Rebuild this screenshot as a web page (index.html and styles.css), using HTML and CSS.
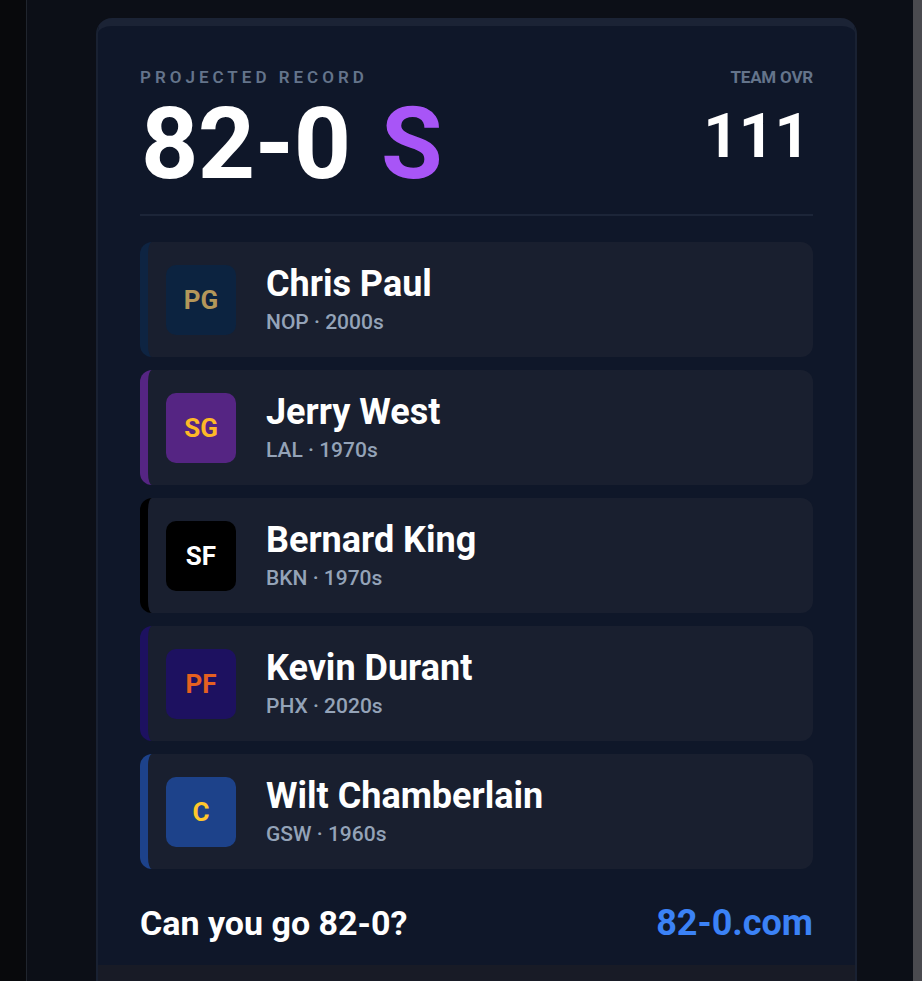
FILE: index.html
```html
<!DOCTYPE html>
<html lang="en">
<head>
<meta charset="utf-8">
<title>82-0 Projected Record</title>
<link rel="stylesheet" href="styles.css">
</head>
<body>
<div class="app">
  <div class="rail"></div>
  <main class="stage">
    <section class="card">
      <div class="card-body">
        <header class="summary">
          <div class="record">
            <div class="label label-wide">PROJECTED RECORD</div>
            <div class="record-value">82-0 <span class="grade">S</span></div>
          </div>
          <div class="ovr">
            <div class="label label-tight">TEAM OVR</div>
            <div class="ovr-value">111</div>
          </div>
        </header>
        <div class="divider"></div>
        <ul class="roster">
          <li class="player team-nop">
            <div class="pos">PG</div>
            <div class="info"><div class="name">Chris Paul</div><div class="meta">NOP · 2000s</div></div>
          </li>
          <li class="player team-lal">
            <div class="pos">SG</div>
            <div class="info"><div class="name">Jerry West</div><div class="meta">LAL · 1970s</div></div>
          </li>
          <li class="player team-bkn">
            <div class="pos">SF</div>
            <div class="info"><div class="name">Bernard King</div><div class="meta">BKN · 1970s</div></div>
          </li>
          <li class="player team-phx">
            <div class="pos">PF</div>
            <div class="info"><div class="name">Kevin Durant</div><div class="meta">PHX · 2020s</div></div>
          </li>
          <li class="player team-gsw">
            <div class="pos">C</div>
            <div class="info"><div class="name">Wilt Chamberlain</div><div class="meta">GSW · 1960s</div></div>
          </li>
        </ul>
        <footer class="cta">
          <span class="cta-text">Can you go 82-0?</span>
          <span class="cta-link">82-0.com</span>
        </footer>
      </div>
      <div class="card-base"></div>
    </section>
  </main>
  <div class="scrollbar"></div>
</div>
</body>
</html>
```
FILE: styles.css
```css
html, body {
  margin: 0;
  padding: 0;
  height: 981px;
  overflow: hidden;
}
body {
  background: #0d1018;
  font-family: Roboto, "Noto Sans", "Liberation Sans", sans-serif;
  color: #ffffff;
}
.app {
  display: flex;
  height: 981px;
}
.rail {
  width: 26px;
  flex: 0 0 26px;
  background: #08090c;
  border-right: 1px solid #20252e;
}
.stage {
  flex: 1;
  background: #0c0f17;
  padding: 18px 0 0 69px;
  overflow: hidden;
}
.scrollbar {
  width: 9px;
  flex: 0 0 9px;
  background: #4a4a4f;
}
.card {
  box-sizing: border-box;
  width: 761px;
  background: #0f1729;
  border: 2px solid #192132;
  border-top: 8px solid #1b2335;
  border-radius: 16px 16px 0 0;
}
.card-body {
  padding: 41px 42px 22px 42px;
}
.card-base {
  height: 60px;
  background: #181b26;
}
.summary {
  display: flex;
  justify-content: space-between;
  align-items: flex-start;
}
.label {
  font-size: 17px;
  line-height: 20px;
  color: #64748b;
  font-weight: 600;
}
.label-wide {
  letter-spacing: 4px;
}
.label-tight {
  font-weight: 700;
  letter-spacing: -0.2px;
  text-align: right;
}
.record-value {
  margin-top: 7px;
  font-size: 100px;
  line-height: 100px;
  font-weight: 700;
  letter-spacing: -0.5px;
  margin-left: 1px;
}
.grade {
  color: #a855f7;
  margin-left: 6px;
}
.ovr {
  text-align: right;
}
.ovr-value {
  margin-top: 18px;
  font-size: 62px;
  line-height: 62px;
  font-weight: 700;
  margin-right: 3px;
}
.divider {
  margin-top: 20px;
  height: 2px;
  background: #1c2538;
}
.roster {
  list-style: none;
  margin: 26px 0 0 0;
  padding: 0;
  display: flex;
  flex-direction: column;
  gap: 13px;
}
.player {
  box-sizing: border-box;
  height: 115px;
  display: flex;
  align-items: center;
  gap: 30px;
  padding-left: 18px;
  background: #191f2f;
  border-left: 8px solid transparent;
  border-radius: 12px;
}
.pos {
  width: 70px;
  height: 70px;
  border-radius: 10px;
  display: flex;
  align-items: center;
  justify-content: center;
  font-size: 26px;
  font-weight: 700;
}
.info {
  margin-bottom: 1px;
}
.name {
  font-size: 36px;
  line-height: 40px;
  font-weight: 700;
  color: #ffffff;
}
.meta {
  margin-top: 6px;
  font-size: 21px;
  line-height: 24px;
  font-weight: 500;
  color: #94a3b8;
}
.team-nop { border-left-color: #0e2442; }
.team-nop .pos { background: #0c2340; color: #b4975a; }
.team-lal { border-left-color: #552583; }
.team-lal .pos { background: #552583; color: #fdb927; }
.team-bkn { border-left-color: #000000; }
.team-bkn .pos { background: #000000; color: #ffffff; }
.team-phx { border-left-color: #1d1160; }
.team-phx .pos { background: #1d1160; color: #e56020; }
.team-gsw { border-left-color: #1d428a; }
.team-gsw .pos { background: #1d428a; color: #ffc72c; }
.cta {
  margin-top: 34px;
  display: flex;
  justify-content: space-between;
  align-items: baseline;
  line-height: 40px;
}
.cta-text {
  font-size: 34px;
  font-weight: 700;
}
.cta-link {
  font-size: 36px;
  font-weight: 700;
  color: #3b82f6;
}
```
